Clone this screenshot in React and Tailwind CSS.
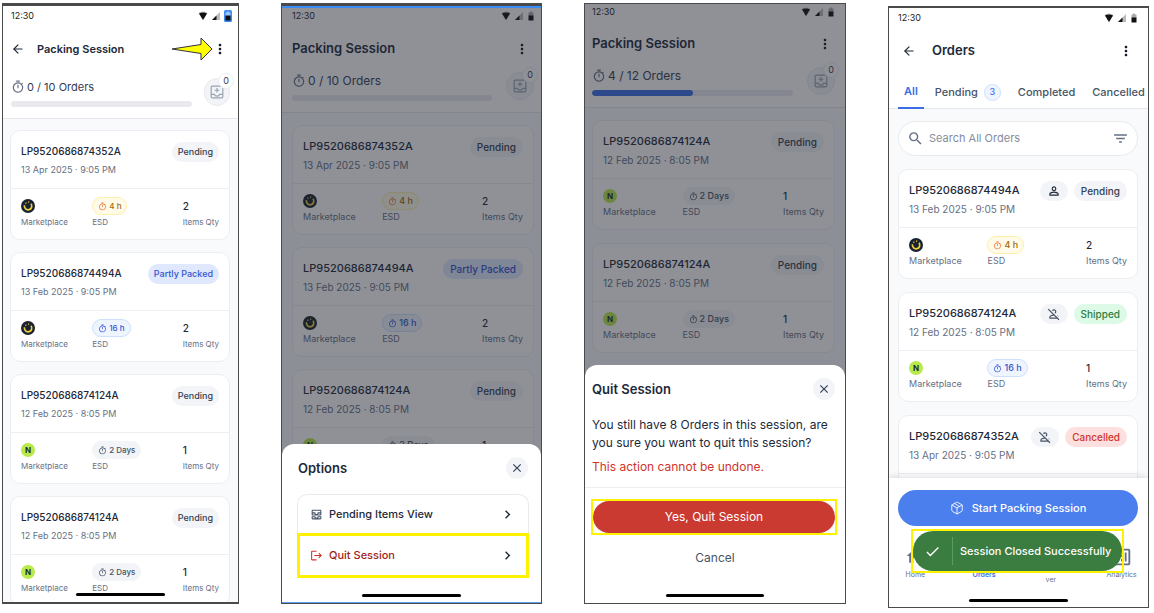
import React from 'react';
import { ArrowLeft, Package } from 'lucide-react';
import {
  MdCheck,
  MdChevronRight,
  MdClose,
  MdFilterList,
  MdHome,
  MdLogout,
  MdMoreVert,
  MdOutlineAllInbox,
  MdOutlineAnalytics,
  MdOutlinePersonOff,
  MdOutlineTimer,
  MdPersonOutline,
  MdSearch,
} from 'react-icons/md';

const A = { id: 'LP9520686874352A', date: '13 Apr 2025 · 9:05 PM', market: 'C', esd: '4 h', qty: 2 };
const B = { id: 'LP9520686874494A', date: '13 Feb 2025 · 9:05 PM', market: 'C', esd: '16 h', qty: 2 };
const C = { id: 'LP9520686874124A', date: '12 Feb 2025 · 8:05 PM', market: 'N', esd: '2 Days', qty: 1 };

const statusStyles = {
  Pending: 'bg-[#f2f4f7] text-[#344054]',
  'Partly Packed': 'bg-[#dfe8fd] text-[#3355d1]',
  Shipped: 'bg-[#dcfae6] text-[#2f7d43]',
  Cancelled: 'bg-[#fbe0df] text-[#d0342c]',
};

const esdStyles = {
  '4 h': 'bg-[#fffbe8] border-[#fdf0a8] text-[#a1690c]',
  '16 h': 'bg-[#eff5ff] border-[#cfe0fc] text-[#3355d1]',
  '2 Days': 'bg-[#f2f4f7] border-[#f2f4f7] text-[#475467]',
};

const StatusBar = ({ className, highlight }) => (
  <div className={`flex items-center justify-between ${className}`}>
    <span className="text-[9px] leading-4 text-[#222]">12:30</span>
    <svg width="34" height="12" viewBox="0 0 34 12">
      <path d="M0.500 3Q5 0 9.500 3L5 10Z" fill="#bbb" />
      <path d="M1 3.500Q5 1.500 9 3.500L5 10Z" fill="#111" />
      <path d="M14 10H22V2Z" fill="#bbb" />
      <path d="M14 10H18.500V5.500Z" fill="#111" />
      {highlight && <rect x="26" y="0" width="8" height="12" rx="1.500" fill="#3b8cf5" />}
      <path d="M27.500 2.500H29V1.500H31V2.500H32.500V6H27.500Z" fill={highlight ? '#9cc5fa' : '#aaa'} />
      <rect x="27.500" y="5.500" width="5" height="5" fill="#111" />
    </svg>
  </div>
);

const InboxPlus = () => (
  <svg width="14" height="14" viewBox="0 0 24 24" fill="none" stroke="currentColor" strokeWidth="2">
    <rect x="2" y="2" width="20" height="20" rx="2" />
    <path d="M2 16h5.500c.5 2 2.200 3 4.500 3s4-1 4.500-3H22" />
    <path d="M12 5v8M8 9h8" />
  </svg>
);

const MarketIcon = ({ market }) =>
  market === 'N' ? (
    <svg width="14" height="14" viewBox="0 0 14 14" className="font-['Inter',sans-serif]">
      <circle cx="7" cy="7" r="7" fill="#b9e94b" />
      <text x="7" y="10" textAnchor="middle" fontSize="8" fontWeight="700" fill="#1d2939">N</text>
    </svg>
  ) : (
    <svg width="14" height="14" viewBox="0 0 14 14" fill="none" stroke="#f0cf3c">
      <circle cx="7" cy="7" r="7" fill="#182230" stroke="none" />
      <path d="M10 4.800A3.700 3.700 0 1 1 3.500 6.200" strokeWidth="1.700" />
      <path d="M4.400 4.600l1-.9M7 3.200h1.200" strokeWidth="1.200" />
    </svg>
  );

const OrderCard = ({ order, status, assignee, narrow }) => (
  <article className="shrink-0 rounded-[10px] border border-[#eceef2] bg-white">
    <div className="flex items-start justify-between px-2.5 pt-2.5 pb-[9px]">
      <div>
        <h3 className={`leading-5 font-medium text-[#1d2939] ${narrow ? 'text-[10px]' : 'text-[11px]'}`}>{order.id}</h3>
        <p className={`leading-[18px] text-[#667085] ${narrow ? 'text-[9px]' : 'text-[10px]'}`}>{order.date}</p>
      </div>
      <div className="mt-px flex gap-1.5">
        {assignee && (
          <span className="flex h-5 w-7 items-center justify-center rounded-full bg-[#f2f4f7] text-[#475467]">
            {assignee === 'on' ? <MdPersonOutline size={14} className="text-[#1d2939]" /> : <MdOutlinePersonOff size={14} />}
          </span>
        )}
        <span
          className={`rounded-full leading-5 font-medium ${narrow ? 'px-1.5 text-[9px]' : 'px-[7px] text-[10px]'} ${statusStyles[status]}`}
        >
          {status}
        </span>
      </div>
    </div>
    <div
      className={`grid grid-cols-[36%_1fr_auto] border-t border-[#eceef2] px-2.5 pt-2 pb-2.5 leading-[14px] text-[#667085] ${narrow ? 'text-[8px]' : 'text-[9px]'}`}
    >
      <div>
        <div className="flex h-[18px] items-center"><MarketIcon market={order.market} /></div>
        Marketplace
      </div>
      <div>
        <div
          className={`flex h-[18px] w-fit items-center gap-0.5 rounded-full border px-[5px] font-medium ${esdStyles[order.esd]}`}
        >
          <MdOutlineTimer size={9} className={order.esd === '4 h' ? 'text-[#e8743b]' : ''} />
          {order.esd}
        </div>
        ESD
      </div>
      <div>
        <div className="h-[18px] text-[10px] leading-[18px] font-medium text-[#1d2939]">{order.qty}</div>
        Items Qty
      </div>
    </div>
  </article>
);

const TitleBar = ({ title, back, narrow, className }) => (
  <header className={`flex items-center ${className}`}>
    {back && (
      <button aria-label="Back" className={narrow ? 'mr-3' : 'mr-4'}>
        <ArrowLeft size={14} className="text-[#1d2939]" />
      </button>
    )}
    <h2 className={`font-semibold text-[#1d2939] ${narrow ? 'text-[11px]' : 'text-[13px]'}`}>{title}</h2>
    <button aria-label="More" className="ml-auto">
      <MdMoreVert size={16} className="text-[#101828]" />
    </button>
  </header>
);

const Progress = ({ done, total, narrow, className }) => (
  <section className={`flex border-b border-[#e4e7ec] pb-[11px] ${className}`}>
    <div className="flex-1">
      <p className={`flex items-center gap-0.5 leading-5 text-[#344054] ${narrow ? 'text-[11px]' : 'text-[12px]'}`}>
        <MdOutlineTimer size={14} className="text-[#667085]" />
        {done} / {total} Orders
      </p>
      <div className="mt-1 h-1.5 overflow-hidden rounded-full bg-[#e8eaee]">
        <div className="h-full rounded-full bg-[#3b6fe8]" style={{ width: `${done ? 50 : 0}%` }} />
      </div>
    </div>
    <div className={`relative ${narrow ? 'ml-3' : 'ml-3.5'}`}>
      <button
        aria-label="Inbox"
        className={`mt-px flex h-7 items-center justify-center rounded-full border border-[#e8eaee] bg-[#f2f4f7] text-[#98a2b3] ${narrow ? 'w-[26px]' : 'w-7'}`}
      >
        <InboxPlus />
      </button>
      <span className="absolute -top-1 -right-1 flex size-4 items-center justify-center rounded-full border border-[#eceef2] bg-white text-[9px] text-[#344054]">
        0
      </span>
    </div>
  </section>
);

const Phone = ({ children, className }) => (
  <section className={`relative flex min-w-0 flex-col overflow-hidden border border-[#4a4a4a] bg-white ${className}`}>
    {children}
  </section>
);

const Sheet = ({ title, children, className }) => (
  <div className="absolute inset-0 flex flex-col justify-end bg-[#1f2330]/50">
    <div className="rounded-t-xl bg-white pt-[13px] pb-1.5">
      <div className={`flex items-center justify-between ${className}`}>
        <h2 className="pt-0.5 text-[13px] font-semibold text-[#1d2939]">{title}</h2>
        <button aria-label="Close" className="flex size-[22px] items-center justify-center rounded-full bg-[#f2f4f7]">
          <MdClose size={14} className="text-[#344054]" />
        </button>
      </div>
      {children}
    </div>
  </div>
);

const HomeBar = () => <div className="mx-auto h-[3px] w-[38%] rounded-full bg-black" />;

const SessionPhone = () => (
  <Phone className="mt-[3px] mb-[9px] border-t-[3px] border-b-2">
    <StatusBar className="h-5 pr-1.5 pl-2" highlight />
    <TitleBar title="Packing Session" back narrow className="h-[46px] pr-2.5 pl-2" />
    <svg className="absolute top-[31px] right-[25px]" width="42" height="24" viewBox="0 0 42 24">
      <path d="M1 12L30 7.500V1L41 12L30 23V16.500Z" fill="#ffff00" stroke="#333" />
    </svg>
    <Progress done={0} total={10} narrow className="pt-[5px] pr-2 pl-2" />
    <div className="flex min-h-0 flex-1 flex-col gap-3 overflow-hidden bg-[#f9fafb] pt-[11px] pr-2 pl-[7px]">
      <OrderCard order={A} status="Pending" narrow />
      <OrderCard order={B} status="Partly Packed" narrow />
      <OrderCard order={C} status="Pending" narrow />
      <OrderCard order={C} status="Pending" narrow />
    </div>
    <div className="absolute inset-x-0 bottom-1.5"><HomeBar /></div>
  </Phone>
);

const OptionsPhone = () => (
  <Phone className="mt-[3px] mb-[9px] border-t-[3px]">
    <StatusBar className="h-5 pr-1.5 pl-2.5" />
    <TitleBar title="Packing Session" className="h-[45px] pt-px pr-[11px] pl-2.5" />
    <Progress done={0} total={10} className="pr-[7px] pl-2.5" />
    <div className="flex min-h-0 flex-1 flex-col gap-3 overflow-hidden bg-[#f9fafb] pt-3 pr-[7px] pl-2.5">
      <OrderCard order={A} status="Pending" />
      <OrderCard order={B} status="Partly Packed" />
      <OrderCard order={C} status="Pending" />
    </div>
    <Sheet title="Options" className="pr-[13px] pl-4">
      <ul className="mt-[15px] mr-3 ml-[15px] rounded-t-[10px] border-x border-t border-[#e8eaee] text-[11px] font-medium">
        <li>
          <button className="flex h-[38px] w-full items-center gap-1.5 px-3 text-[#1d2939]">
            <MdOutlineAllInbox size={13} className="text-[#475467]" />
            Pending Items View
            <MdChevronRight size={17} className="ml-auto" />
          </button>
        </li>
        <li className="-mx-px border-[3px] border-[#fff200]">
          <button className="flex h-[39px] w-full items-center gap-1.5 px-2.5 text-[#a3221c]">
            <MdLogout size={13} className="text-[#d0342c]" />
            Quit Session
            <MdChevronRight size={17} className="ml-auto text-[#1d2939]" />
          </button>
        </li>
      </ul>
      <div className="pt-4"><HomeBar /></div>
    </Sheet>
    <div className="absolute inset-x-0 top-0 h-0.5 bg-[#3b8cf5]" />
    <div className="absolute inset-x-0 bottom-0 h-px bg-[#5ba0f5]" />
  </Phone>
);

const QuitPhone = () => (
  <Phone className="mt-[3px] mb-[9px]">
    <StatusBar className="h-4 pr-2.5 pl-[7px]" />
    <TitleBar title="Packing Session" className="h-[46px] pt-0.5 pr-3 pl-[7px]" />
    <Progress done={4} total={12} className="pr-2.5 pl-[7px]" />
    <div className="flex min-h-0 flex-1 flex-col gap-[13px] overflow-hidden bg-[#f9fafb] pt-3 pr-2.5 pl-[7px]">
      <OrderCard order={C} status="Pending" />
      <OrderCard order={C} status="Pending" />
    </div>
    <Sheet title="Quit Session" className="pr-2.5 pl-[7px]">
      <div className="mt-4 border-b border-[#eceef2] px-[7px] pb-[11px] text-[12px] leading-[18px]">
        <p className="text-[#1d2939]">You still have 8 Orders in this session, are you sure you want to quit this session?</p>
        <p className="mt-1.5 text-[#d0342c]">This action cannot be undone.</p>
      </div>
      <div className="mt-[11px] mr-2 ml-1.5 border-2 border-[#fff200]">
        <button className="h-8 w-full rounded-full bg-[#cb3a31] text-[12px] text-white">Yes, Quit Session</button>
      </div>
      <button className="mx-auto mt-3.5 block text-[12px] leading-[18px] text-[#475467]">Cancel</button>
      <div className="pt-[27px]"><HomeBar /></div>
    </Sheet>
  </Phone>
);

const OrdersPhone = () => (
  <Phone className="mt-[6px] mb-[5px] border-t-2">
    <StatusBar className="h-5 pr-2.5 pl-[9px]" />
    <TitleBar title="Orders" back className="h-11 pt-0.5 pr-3.5 pl-[13px]" />
    <nav className="flex h-[37px] shrink-0 items-stretch border-b border-[#e4e7ec] pl-[9px] text-[11px] font-medium whitespace-nowrap text-[#475467]">
      <button className="-mb-px border-b-2 border-[#3b6fe8] px-1.5 pt-1 font-semibold text-[#3b6fe8]">All</button>
      <button className="ml-[11px] flex items-center gap-1.5 pt-1">
        Pending
        <span className="flex size-[17px] items-center justify-center rounded-full border border-[#cfe0fc] bg-[#eff5ff] text-[9px] text-[#3b6fe8]">3</span>
      </button>
      <button className="ml-[17px] pt-1">Completed</button>
      <button className="ml-[17px] pt-1">Cancelled</button>
    </nav>
    <div className="flex min-h-0 flex-1 flex-col gap-[13px] overflow-hidden bg-[#f9fafb] pt-3 pr-2.5 pl-[9px]">
      <label className="flex h-[35px] shrink-0 items-center rounded-full border border-[#e8eaee] bg-white px-2">
        <MdSearch size={17} className="text-[#667085]" />
        <input
          aria-label="Search"
          placeholder="Search All Orders"
          className="ml-[5px] min-w-0 flex-1 text-[11px] outline-none placeholder:text-[#858d9d]"
        />
        <MdFilterList size={17} className="text-[#667085]" />
      </label>
      <OrderCard order={{ ...B, esd: '4 h' }} status="Pending" assignee="on" />
      <OrderCard order={{ ...C, esd: '16 h' }} status="Shipped" assignee="off" />
      <OrderCard order={A} status="Cancelled" assignee="off" />
    </div>
    <footer className="relative bg-white pt-3 pb-[5px] shadow-[0_-2px_6px_rgba(16,24,40,0.12)]">
      <button className="mr-2.5 ml-[9px] flex h-9 w-[calc(100%-19px)] items-center justify-center gap-2 rounded-full bg-[#4c7fee] text-[11px] font-medium text-white">
        <Package size={14} strokeWidth={1.5} />
        Start Packing Session
      </button>
      <nav className="mt-5 grid grid-cols-4 text-center text-[7px] leading-[10px] text-[#667085]">
        <a href="#home" className="-ml-3"><MdHome size={20} className="mx-auto mb-1" />Home</a>
        <a href="#orders" className="-ml-1 pt-6 font-semibold text-[#3b6fe8]">Orders</a>
        <a href="#handover" className="pt-[29px]">ver</a>
        <a href="#analytics" className="pl-3"><MdOutlineAnalytics size={22} className="mx-auto mb-0.5" />Analytics</a>
      </nav>
      <div className="pt-3.5"><HomeBar /></div>
      <div className="absolute top-[51px] right-6 left-[22px] border-2 border-[#fff200]">
        <div className="flex h-10 items-center rounded-full bg-[#3b7d40] text-[11px] font-medium text-white">
          <MdCheck size={17} className="mx-[11px]" />
          <span className="mr-[7px] h-7 border-l border-[#55a05a]" />
          <span className="whitespace-nowrap">Session Closed Successfully</span>
        </div>
      </div>
    </footer>
  </Phone>
);

const App = () => (
  <main className="grid h-screen min-h-[560px] grid-cols-[237fr_261fr_262fr_261fr] gap-[42px] bg-white pr-[5px] pl-0.5 font-['Inter',sans-serif]">
    <SessionPhone />
    <OptionsPhone />
    <QuitPhone />
    <OrdersPhone />
  </main>
);

export default App;
